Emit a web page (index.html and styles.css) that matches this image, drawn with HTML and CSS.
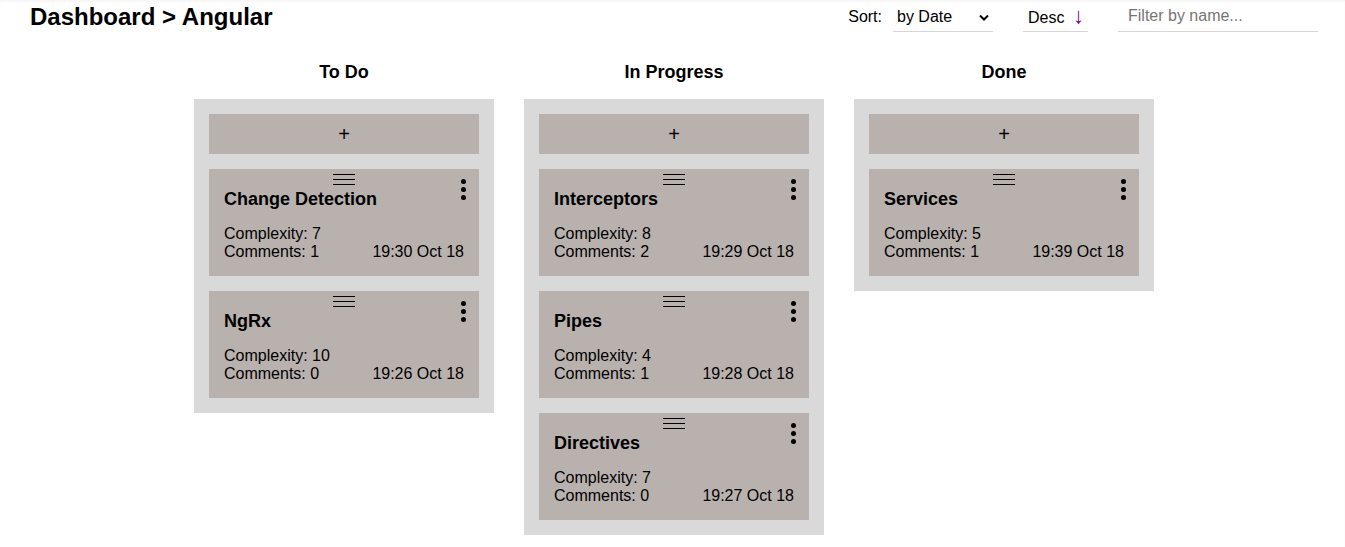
FILE: index.html
```html
<!DOCTYPE html>
<html>
<head>
<meta charset="utf-8">
<link rel="stylesheet" href="styles.css">
</head>
<body>
<header class="topbar">
  <h1 class="crumb">Dashboard &gt; Angular</h1>
  <div class="controls">
    <span class="sort-label">Sort:</span>
    <div class="select">
      <span>by Date</span>
      <svg class="chev" width="10" height="7" viewBox="0 0 10 7"><path d="M1 1.5 L5 5.5 L9 1.5" fill="none" stroke="#000" stroke-width="2"/></svg>
    </div>
    <div class="order">Desc <span class="arrow">↓</span></div>
    <div class="filter">Filter by name...</div>
  </div>
</header>

<main class="board">
  <section class="column">
    <h2 class="col-title">To Do</h2>
    <div class="panel">
      <div class="add">+</div>
      <div class="card">
        <div class="handle"><i></i><i></i><i></i></div>
        <div class="dots"><b></b><b></b><b></b></div>
        <div class="card-title">Change Detection</div>
        <div class="meta">
          <div>Complexity: 7</div>
          <div class="row"><span>Comments: 1</span><span>19:30 Oct 18</span></div>
        </div>
      </div>
      <div class="card">
        <div class="handle"><i></i><i></i><i></i></div>
        <div class="dots"><b></b><b></b><b></b></div>
        <div class="card-title">NgRx</div>
        <div class="meta">
          <div>Complexity: 10</div>
          <div class="row"><span>Comments: 0</span><span>19:26 Oct 18</span></div>
        </div>
      </div>
    </div>
  </section>

  <section class="column">
    <h2 class="col-title">In Progress</h2>
    <div class="panel">
      <div class="add">+</div>
      <div class="card">
        <div class="handle"><i></i><i></i><i></i></div>
        <div class="dots"><b></b><b></b><b></b></div>
        <div class="card-title">Interceptors</div>
        <div class="meta">
          <div>Complexity: 8</div>
          <div class="row"><span>Comments: 2</span><span>19:29 Oct 18</span></div>
        </div>
      </div>
      <div class="card">
        <div class="handle"><i></i><i></i><i></i></div>
        <div class="dots"><b></b><b></b><b></b></div>
        <div class="card-title">Pipes</div>
        <div class="meta">
          <div>Complexity: 4</div>
          <div class="row"><span>Comments: 1</span><span>19:28 Oct 18</span></div>
        </div>
      </div>
      <div class="card">
        <div class="handle"><i></i><i></i><i></i></div>
        <div class="dots"><b></b><b></b><b></b></div>
        <div class="card-title">Directives</div>
        <div class="meta">
          <div>Complexity: 7</div>
          <div class="row"><span>Comments: 0</span><span>19:27 Oct 18</span></div>
        </div>
      </div>
    </div>
  </section>

  <section class="column">
    <h2 class="col-title">Done</h2>
    <div class="panel">
      <div class="add">+</div>
      <div class="card">
        <div class="handle"><i></i><i></i><i></i></div>
        <div class="dots"><b></b><b></b><b></b></div>
        <div class="card-title">Services</div>
        <div class="meta">
          <div>Complexity: 5</div>
          <div class="row"><span>Comments: 1</span><span>19:39 Oct 18</span></div>
        </div>
      </div>
    </div>
  </section>
</main>
</body>
</html>
```

FILE: styles.css
```css
html, body {
  margin: 0;
  padding: 0;
  background: #fff;
  font-family: "Liberation Sans", Arial, sans-serif;
  color: #000;
}
body {
  box-shadow: inset 0 2px 3px -1px rgba(0,0,0,0.06);
  min-height: 547px;
}
.topbar {
  display: flex;
  justify-content: space-between;
  align-items: flex-start;
  padding: 0 27px 0 30px;
  height: 40px;
}
.crumb {
  margin: 0;
  font-size: 24px;
  font-weight: bold;
  line-height: 28px;
  padding-top: 3px;
}
.controls {
  display: flex;
  align-items: flex-start;
  font-size: 16px;
}
.sort-label {
  line-height: 34px;
  margin-right: 11px;
}
.select {
  width: 100px;
  height: 32px;
  box-sizing: border-box;
  border-bottom: 1px solid #d6d6d6;
  display: flex;
  justify-content: space-between;
  align-items: center;
  padding: 2px 4px 0 4px;
  line-height: 32px;
}
.chev { margin-top: 1px; }
.order {
  margin-left: 30px;
  width: 65px;
  height: 32px;
  box-sizing: border-box;
  border-bottom: 1px solid #d6d6d6;
  padding-left: 5px;
  line-height: 32px;
}
.arrow {
  color: #800080;
  font-size: 22px;
  margin-left: 4px;
}
.filter {
  margin-left: 30px;
  width: 200px;
  height: 32px;
  box-sizing: border-box;
  border-bottom: 1px solid #d6d6d6;
  padding-left: 10px;
  color: #757575;
  line-height: 32px;
}
.board {
  display: flex;
  justify-content: center;
  align-items: flex-start;
  gap: 30px;
  padding-left: 3px;
}
.column {
  width: 300px;
}
.col-title {
  margin: 0;
  text-align: center;
  font-size: 18px;
  font-weight: bold;
  line-height: 22px;
  padding-top: 21px;
  padding-bottom: 16px;
}
.panel {
  background: #d9d9d9;
  padding: 15px;
  display: flex;
  flex-direction: column;
  gap: 15px;
}
.add {
  height: 40px;
  background: #b9b1ae;
  display: flex;
  align-items: center;
  justify-content: center;
  font-size: 20px;
}
.card {
  position: relative;
  background: #b9b1ae;
  padding: 5px 15px 15px;
}
.handle {
  width: 22px;
  height: 11px;
  margin: 0 auto;
  display: flex;
  flex-direction: column;
  justify-content: space-between;
}
.handle i {
  display: block;
  height: 1px;
  background: #000;
}
.dots {
  position: absolute;
  top: 10px;
  right: 13px;
  display: flex;
  flex-direction: column;
  gap: 3px;
}
.dots b {
  display: block;
  width: 5px;
  height: 5px;
  border-radius: 50%;
  background: #000;
}
.card-title {
  font-size: 18px;
  font-weight: bold;
  line-height: 22px;
  margin-top: 3px;
}
.meta {
  margin-top: 15px;
  font-size: 16px;
  line-height: 18px;
}
.row {
  display: flex;
  justify-content: space-between;
}
```
